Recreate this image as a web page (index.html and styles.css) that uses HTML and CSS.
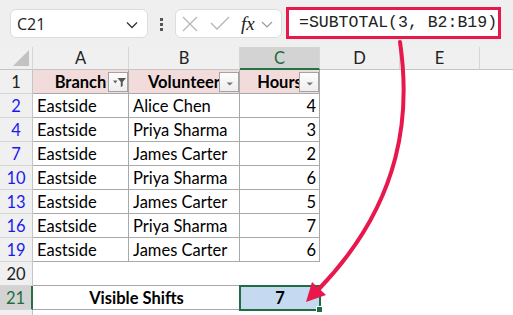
FILE: index.html
```html
<!DOCTYPE html>
<html>
<head>
<meta charset="utf-8">
<link rel="stylesheet" href="styles.css">
</head>
<body>
<div class="app">
  <div class="toolbar">
    <div class="namebox">
      <span class="nb-text">C21</span>
      <svg class="nb-chev" width="12" height="8" viewBox="0 0 12 8"><path d="M1 1.5 L6 6.5 L11 1.5" fill="none" stroke="#333" stroke-width="1.3"/></svg>
    </div>
    <div class="dots"><i></i><i></i><i></i></div>
    <div class="fnbox">
      <svg class="ico-x" width="18" height="16" viewBox="0 0 18 16"><path d="M2 1 L16 15 M16 1 L2 15" stroke="#b5b5b5" stroke-width="1.3" fill="none"/></svg>
      <svg class="ico-check" width="20" height="14" viewBox="0 0 20 14"><path d="M1 7 L7 13 L19 1" stroke="#b5b5b5" stroke-width="1.3" fill="none"/></svg>
      <span class="fx">fx</span>
      <svg class="fx-chev" width="12" height="7" viewBox="0 0 12 7"><path d="M1 1 L6 6 L11 1" fill="none" stroke="#9a9a9a" stroke-width="1.2"/></svg>
    </div>
    <div class="formula">=SUBTOTAL(3, B2:B19)</div>
  </div>

  <div class="sheet">
    <div class="corner"><span class="tri"></span></div>
    <div class="colhead">A</div>
    <div class="colhead">B</div>
    <div class="colhead active">C</div>
    <div class="colhead">D</div>
    <div class="colhead">E</div>
    <div class="colhead last"></div>

    <div class="rowhead plain">1</div>
    <div class="cell hdr">Branch<span class="fbtn"><svg width="19" height="19" viewBox="0 0 19 19"><polygon points="4,7.5 8.5,7.5 6.25,10.5" fill="#666"/><path d="M8.5 5 H17 L13.7 9 V13 L11.8 14 V9 Z" fill="#555"/></svg></span></div>
    <div class="cell hdr">Volunteer<span class="fbtn"><svg width="19" height="19" viewBox="0 0 19 19"><polygon points="6.5,9.5 13,9.5 9.75,12.5" fill="#777"/></svg></span></div>
    <div class="cell hdr">Hours<span class="fbtn"><svg width="19" height="19" viewBox="0 0 19 19"><polygon points="6.5,9.5 13,9.5 9.75,12.5" fill="#777"/></svg></span></div>
    <div class="blank"></div><div class="blank"></div><div class="blank"></div>

    <div class="rowhead">2</div><div class="cell">Eastside</div><div class="cell">Alice Chen</div><div class="cell num">4</div><div class="blank"></div><div class="blank"></div><div class="blank"></div>
    <div class="rowhead">4</div><div class="cell">Eastside</div><div class="cell">Priya Sharma</div><div class="cell num">3</div><div class="blank"></div><div class="blank"></div><div class="blank"></div>
    <div class="rowhead">7</div><div class="cell">Eastside</div><div class="cell">James Carter</div><div class="cell num">2</div><div class="blank"></div><div class="blank"></div><div class="blank"></div>
    <div class="rowhead">10</div><div class="cell">Eastside</div><div class="cell">Priya Sharma</div><div class="cell num">6</div><div class="blank"></div><div class="blank"></div><div class="blank"></div>
    <div class="rowhead">13</div><div class="cell">Eastside</div><div class="cell">James Carter</div><div class="cell num">5</div><div class="blank"></div><div class="blank"></div><div class="blank"></div>
    <div class="rowhead">16</div><div class="cell">Eastside</div><div class="cell">Priya Sharma</div><div class="cell num">7</div><div class="blank"></div><div class="blank"></div><div class="blank"></div>
    <div class="rowhead">19</div><div class="cell">Eastside</div><div class="cell">James Carter</div><div class="cell num">6</div><div class="blank"></div><div class="blank"></div><div class="blank"></div>

    <div class="rowhead plain">20</div><div class="gap"></div><div class="gap"></div><div class="gap"></div><div class="blank"></div><div class="blank"></div><div class="blank"></div>

    <div class="rowhead active">21</div>
    <div class="cell total span2">Visible Shifts</div>
    <div class="cell result">7<span class="handle"></span></div>
    <div class="blank"></div><div class="blank"></div><div class="blank"></div>

    <div class="rowhead plain"></div>
  </div>

  <svg class="arrow" width="513" height="315" viewBox="0 0 513 315">
    <path d="M400 42 C410 110, 405 200, 318 290" fill="none" stroke="#e8174c" stroke-width="4" stroke-linecap="round"/>
    <polygon points="306,302 312,282 326,295" fill="#e8174c"/>
  </svg>
</div>
</body>
</html>
```

FILE: styles.css
```css
* { box-sizing: border-box; }
html, body { margin: 0; padding: 0; background: #fff; }
body { width: 513px; height: 315px; overflow: hidden; }

.app { position: relative; width: 513px; height: 315px; overflow: hidden; }

.toolbar {
  height: 47px;
  background: #efefef;
  display: flex;
  align-items: flex-start;
  padding: 9px 0 0 10px;
}
.namebox {
  width: 138px;
  height: 29px;
  background: #fff;
  border: 1px solid #dcdcdc;
  border-radius: 6px;
  display: flex;
  align-items: center;
  justify-content: space-between;
  padding: 0 9px 0 6px;
}
.nb-text {
  font-family: "Open Sans", "Noto Sans", sans-serif;
  font-size: 16px;
  color: #222;
}
.nb-chev { margin-top: 2px; }
.dots {
  width: 4px;
  margin: 9px 11px 0 12px;
  display: flex;
  flex-direction: column;
  gap: 2px;
}
.dots i { display: block; width: 3px; height: 3px; background: #555; }
.fnbox {
  width: 107px;
  height: 29px;
  background: #fff;
  border: 1px solid #dcdcdc;
  border-radius: 6px;
  display: flex;
  align-items: center;
  padding-left: 5px;
}
.ico-x { margin-top: 1px; }
.ico-check { margin-left: 11px; margin-top: -1px; }
.fx {
  font-family: "Liberation Serif", "DejaVu Serif", serif;
  font-style: italic;
  font-size: 19px;
  color: #222;
  margin-left: 11px;
  line-height: 1;
}
.fx-chev { margin-left: 6px; margin-top: 2px; }
.formula {
  margin: -2px 0 0 4px;
  width: 215px;
  height: 32px;
  border: 3px solid #e8174c;
  background: #fff;
  font-family: "Liberation Mono", "DejaVu Sans Mono", monospace;
  font-size: 16.5px;
  line-height: 26px;
  padding-left: 10px;
  color: #222;
  white-space: nowrap;
}

.sheet {
  display: grid;
  grid-template-columns: 33px 96px 111px 80px 80px 80px 33px;
  grid-template-rows: 23px;
  grid-auto-rows: 24px;
  font-family: Lato, "Open Sans", sans-serif;
  font-size: 16.5px;
  color: #000;
}
.corner, .colhead {
  background: #f0f0f0;
  border-right: 1px solid #d6d6d6;
  border-bottom: 1px solid #c4c4c4;
}
.corner { position: relative; }
.tri {
  position: absolute;
  right: 3px;
  bottom: 3px;
  width: 0; height: 0;
  border-left: 16px solid transparent;
  border-bottom: 16px solid #c2c2c2;
}
.colhead {
  text-align: center;
  line-height: 22px;
  color: #222;
}
.colhead.active {
  background: #d3d3d3;
  color: #1e6b40;
  border-bottom: 2px solid #217346;
}
.colhead.last { border-right: none; }

.rowhead {
  background: #f0f0f0;
  border-right: 1px solid #c4c4c4;
  border-bottom: 1px solid #d6d6d6;
  text-align: center;
  line-height: 24px;
  color: #1a1aee;
}
.rowhead.plain { color: #222; }
.rowhead.active {
  background: #d3d3d3;
  color: #1e6b40;
  border-right: 2px solid #217346;
}

.cell {
  border-right: 1px solid #a9a9a9;
  border-bottom: 1px solid #a9a9a9;
  padding: 1px 3px 0 4px;
  line-height: 22px;
  white-space: nowrap;
  overflow: hidden;
}
.cell.num { text-align: right; }
.cell.hdr {
  position: relative;
  background: #f2dcdb;
  font-weight: bold;
  text-align: center;
  padding-left: 0;
  padding-right: 0;
}
.fbtn {
  position: absolute;
  right: 0;
  top: 2px;
  width: 20px;
  height: 20px;
  border: 1px solid #a3a3a3;
  background: linear-gradient(#fdfdfd, #eeeeee);
  display: block;
}
.fbtn svg { display: block; }

.gap { border-bottom: 1px solid #a9a9a9; }
.blank { background: #fff; }

.cell.total {
  grid-column: span 2;
  font-weight: bold;
  text-align: center;
}
.cell.result {
  position: relative;
  overflow: visible;
  background: #c5d9f1;
  font-weight: bold;
  text-align: center;
  outline: 2px solid #1f6e43;
  outline-offset: -1px;
}
.handle {
  position: absolute;
  right: -4px;
  bottom: -4px;
  width: 7px;
  height: 7px;
  background: #1f6e43;
  border: 1px solid #fff;
}

.arrow {
  position: absolute;
  left: 0;
  top: 0;
  pointer-events: none;
}
```
